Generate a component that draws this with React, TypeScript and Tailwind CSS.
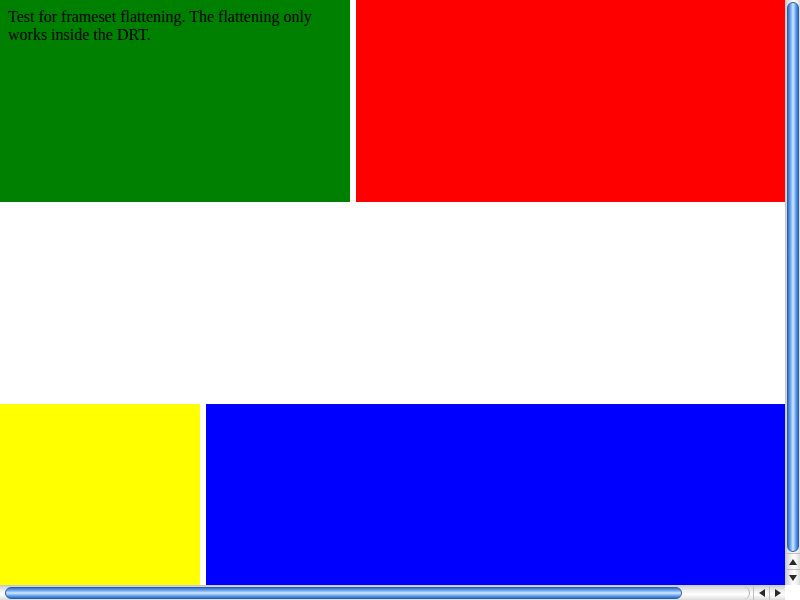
import React from 'react';

function UpArrow() {
  return (
    <svg width="8" height="6" viewBox="0 0 8 6"><path d="M4 0L8 6H0z" fill="#2a2a2a" /></svg>
  );
}
function DownArrow() {
  return (
    <svg width="8" height="6" viewBox="0 0 8 6"><path d="M0 0H8L4 6z" fill="#2a2a2a" /></svg>
  );
}
function LeftArrow() {
  return (
    <svg width="6" height="8" viewBox="0 0 6 8"><path d="M6 0V8L0 4z" fill="#2a2a2a" /></svg>
  );
}
function RightArrow() {
  return (
    <svg width="6" height="8" viewBox="0 0 6 8"><path d="M0 0L6 4L0 8z" fill="#2a2a2a" /></svg>
  );
}

export default function App() {
  return (
    <div className="w-[800px] h-[600px] flex flex-col bg-white overflow-hidden">
      <div className="flex h-[585px]">
        {/* frames */}
        <div className="w-[785px] flex flex-col">
          <div className="flex h-[202px] gap-[6px]">
            <div className="w-[350px] bg-[#008000] p-[8px] font-['Liberation_Serif',serif] text-[16px] leading-[18px] text-black">
              Test for frameset flattening. The flattening only works inside the DRT.
            </div>
            <div className="flex-1 bg-[#ff0000]" />
          </div>
          <div className="h-[202px]" />
          <div className="flex flex-1 gap-[6px]">
            <div className="w-[200px] bg-[#ffff00]" />
            <div className="flex-1 bg-[#0000ff]" />
          </div>
        </div>
        {/* vertical scrollbar */}
        <div className="w-[15px] flex flex-col bg-[linear-gradient(to_right,#d0d0d0,#f4f4f4_40%,#ffffff_60%,#dcdcdc)] border-l border-[#c8c8c8]">
          <div className="flex-1 px-[1px] pt-[2px] pb-[1px]">
            <div className="h-full rounded-full border border-[#2c5fae] bg-[linear-gradient(to_right,#2f6fd0,#7fb4f0_30%,#d2e8fc_50%,#6fa8ec_75%,#2d6acb)]" />
          </div>
          <div className="h-[16px] flex items-center justify-center border-t border-[#c0c0c0]">
            <UpArrow />
          </div>
          <div className="h-[16px] flex items-center justify-center border-t border-[#c0c0c0]">
            <DownArrow />
          </div>
        </div>
      </div>
      {/* horizontal scrollbar */}
      <div className="flex h-[15px]">
        <div className="w-[785px] flex bg-[linear-gradient(to_bottom,#d0d0d0,#f4f4f4_40%,#ffffff_60%,#dcdcdc)] border-t border-[#c8c8c8]">
          <div className="flex-1 flex items-stretch pl-[5px] pr-[3px] py-[1px]">
            <div className="w-[677px] rounded-full border border-[#2c5fae] bg-[linear-gradient(to_bottom,#2f6fd0,#7fb4f0_30%,#d2e8fc_50%,#6fa8ec_75%,#2d6acb)]" />
            <div className="flex-1 rounded-r-full border-r border-[#b0b0b0]" />
          </div>
          <div className="w-[16px] flex items-center justify-center border-l border-[#c0c0c0]">
            <LeftArrow />
          </div>
          <div className="w-[16px] flex items-center justify-center border-l border-[#c0c0c0]">
            <RightArrow />
          </div>
        </div>
        <div className="w-[15px] bg-white" />
      </div>
    </div>
  );
}
